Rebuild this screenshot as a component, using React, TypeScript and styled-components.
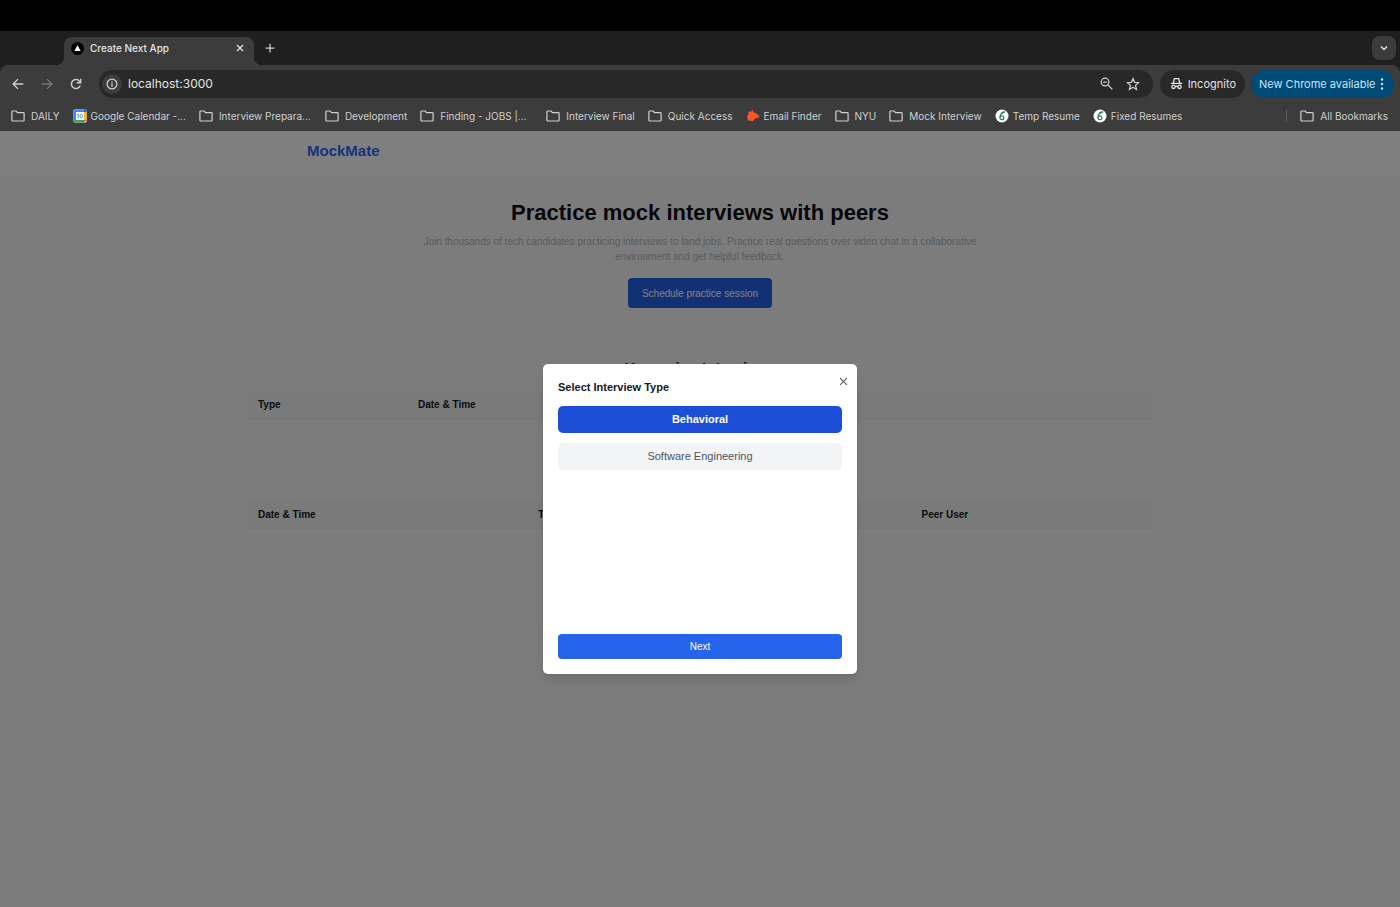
import React from 'react';
import styled, { createGlobalStyle } from 'styled-components';

const GlobalStyle = createGlobalStyle`
  *, *::before, *::after { box-sizing: border-box; }
  body { margin: 0; background: #000; }
  button, input { font: inherit; color: inherit; border: 0; padding: 0; margin: 0; background: none; }
  button { cursor: pointer; }
  svg { display: block; flex: none; }
`;

const Window = styled.div`
  display: flex;
  flex-direction: column;
  min-height: 100vh;
  padding-top: 31px;
  background: #000;
  font-family: Inter, 'Liberation Sans', sans-serif;
  color: #e3e3e3;
`;

const TabStrip = styled.div`
  display: flex;
  align-items: center;
  height: 34px;
  padding: 0 4px 0 64px;
  background: #1f1f1f;
`;

const Tab = styled.div`
  position: relative;
  display: flex;
  align-items: center;
  align-self: flex-end;
  gap: 6px;
  width: 190px;
  height: 28px;
  padding: 0 8px 6px 7px;
  border-radius: 8px 8px 0 0;
  background: #3c3c3c;
  font-size: 10px;
  font-weight: 500;

  &::before, &::after {
    content: '';
    position: absolute;
    bottom: 0;
    width: 8px;
    height: 8px;
  }
  &::before { left: -8px; background: radial-gradient(circle at 0 0, transparent 8px, #3c3c3c 8px); }
  &::after { right: -8px; background: radial-gradient(circle at 100% 0, transparent 8px, #3c3c3c 8px); }
`;

const TabTitle = styled.span`
  flex: 1;
  white-space: nowrap;
`;

const IconButton = styled.button<{ $size?: number; $color?: string }>`
  display: grid;
  place-items: center;
  width: ${(p) => p.$size ?? 16}px;
  height: ${(p) => p.$size ?? 16}px;
  color: ${(p) => p.$color ?? '#d0d0d0'};
`;

const NewTab = styled(IconButton)`
  margin-left: 8px;
`;

const TabSearch = styled(IconButton)`
  margin-left: auto;
  border-radius: 8px;
  background: #3c3c3c;
`;

const ToolbarWrap = styled.div`
  background: #1f1f1f;
`;

const Toolbar = styled.div`
  display: flex;
  align-items: center;
  height: 37px;
  padding: 0 6px 0 8px;
  border-radius: 8px 8px 0 0;
  background: #3c3c3c;
`;

const NavButtons = styled.div`
  display: flex;
  gap: 9px;
  margin-right: 13px;
`;

const AddressBar = styled.div`
  display: flex;
  flex: 1;
  align-items: center;
  gap: 6px;
  height: 28px;
  padding: 0 12px 0 3px;
  border-radius: 14px;
  background: #282828;
`;

const SiteInfo = styled(IconButton)`
  border-radius: 50%;
  background: #3c3c3c;
`;

const AddressInput = styled.input`
  flex: 1;
  min-width: 0;
  outline: 0;
  font-size: 12px;
`;

const AddressActions = styled.div`
  display: flex;
  gap: 11px;
`;

const Pill = styled.button<{ $blue?: boolean }>`
  display: flex;
  align-items: center;
  justify-content: space-between;
  width: ${(p) => (p.$blue ? 143 : 85)}px;
  height: 28px;
  margin-left: ${(p) => (p.$blue ? 6 : 7)}px;
  padding: ${(p) => (p.$blue ? '0 6px 0 8px' : '0 9px 0 10px')};
  border-radius: 14px;
  background: ${(p) => (p.$blue ? '#004a77' : '#282828')};
  color: ${(p) => (p.$blue ? '#c2e7ff' : '#e3e3e3')};
  font-size: 11px;
  white-space: nowrap;
`;

const Bookmarks = styled.nav`
  display: flex;
  align-items: center;
  gap: 13px;
  height: 29px;
  padding: 0 12px 2px 11px;
  background: #3c3c3c;
  color: #d0d0d0;
  font-size: 10px;
`;

const Bookmark = styled.a<{ $wide?: boolean; $site?: boolean }>`
  display: flex;
  flex: none;
  align-items: center;
  gap: ${(p) => (p.$site ? 4 : 6)}px;
  min-width: ${(p) => (p.$wide ? '113px' : '0')};
  color: inherit;
  text-decoration: none;
  white-space: nowrap;
`;

const AllBookmarks = styled.div`
  display: flex;
  align-items: center;
  gap: 13px;
  margin-left: auto;

  &::before {
    content: '';
    width: 1px;
    height: 11px;
    background: #606060;
  }
`;

const Viewport = styled.div`
  position: relative;
  flex: 1;
  background: #f8f9fb;
  color: #111827;
  font-family: 'Liberation Sans', Arial, sans-serif;
`;

const SiteHeader = styled.header`
  padding: 10px 20px 15px;
  background: #fff;
`;

const HeaderInner = styled.div`
  max-width: 786px;
  margin: 0 auto;
`;

const Brand = styled.a`
  color: #2f63f5;
  font-size: 15px;
  font-weight: 700;
  line-height: 20px;
  text-decoration: none;
`;

const Hero = styled.section`
  display: flex;
  flex-direction: column;
  align-items: center;
  padding: 22px 20px 50px;
  text-align: center;
`;

const HeroTitle = styled.h1`
  margin: 0 0 6px;
  color: #0f0f12;
  font-size: 22px;
  line-height: 30px;
`;

const HeroText = styled.p`
  max-width: 560px;
  margin: 0 0 14px;
  color: #b4b8bf;
  font-size: 10px;
  line-height: 15px;
`;

const ScheduleButton = styled.button`
  height: 30px;
  padding: 0 14px;
  border-radius: 4px;
  background: #2563eb;
  color: #fff;
  font-size: 10px;
`;

const Lists = styled.main`
  max-width: 944px;
  margin: 0 auto;
  padding: 0 20px;
`;

const SectionTitle = styled.h2`
  margin: 0 0 13px;
  font-size: 15px;
  line-height: 20px;
  text-align: center;
`;

const DataTable = styled.table`
  width: 100%;
  margin-bottom: 75px;
  border-collapse: collapse;
  table-layout: fixed;
  font-size: 10px;
  text-align: left;
`;

const HeadCell = styled.th<{ $width: number }>`
  width: ${(p) => p.$width}%;
  height: 28px;
  padding: 0 10px;
  border-bottom: 1px solid #ececec;
  background: #f4f4f4;
`;

const EmptyCell = styled.td<{ $height: number }>`
  height: ${(p) => p.$height}px;
  padding: 0;
  border-bottom: 1px solid #f4f5f7;
`;

const Overlay = styled.div`
  position: absolute;
  inset: 0;
  display: grid;
  place-items: center;
  background: rgba(0, 0, 0, 0.5);
`;

const Dialog = styled.div`
  position: relative;
  display: flex;
  flex-direction: column;
  gap: 10px;
  width: 314px;
  min-height: 310px;
  padding: 15px;
  border-radius: 5px;
  background: #fff;
  box-shadow: 0 6px 10px rgba(0, 0, 0, 0.1);
`;

const DialogTitle = styled.h3`
  margin: 0;
  font-size: 11px;
  line-height: 17px;
`;

const CloseButton = styled(IconButton)`
  position: absolute;
  top: 9px;
  right: 6px;
`;

const Option = styled.button<{ $selected?: boolean }>`
  height: 27px;
  padding-bottom: 1px;
  border-radius: 5px;
  background: ${(p) => (p.$selected ? '#1d4ed8' : '#f3f4f6')};
  color: ${(p) => (p.$selected ? '#fff' : '#4b5563')};
  font-size: 11px;
  font-weight: ${(p) => (p.$selected ? 700 : 400)};
`;

const NextButton = styled.button`
  height: 25px;
  margin-top: auto;
  border-radius: 4px;
  background: #2563eb;
  color: #fff;
  font-size: 10px;
`;

type StrokeProps = { size?: number; width?: number; children: React.ReactNode };

const Stroke = ({ size = 16, width = 1.4, children }: StrokeProps) => (
  <svg width={size} height={size} viewBox="0 0 16 16" fill="none" stroke="currentColor" strokeWidth={width} aria-hidden="true">
    {children}
  </svg>
);

const FolderIcon = () => (
  <svg width="14" height="12" viewBox="0 0 14 12" fill="none" stroke="currentColor" strokeWidth="1.2" strokeLinejoin="round" aria-hidden="true">
    <path d="M1.6 1H5l1.5 1.6h5.9c.4 0 .7.3.7.7v7c0 .4-.3.7-.7.7H1.6c-.4 0-.7-.3-.7-.7V1.7c0-.4.3-.7.7-.7Z" />
  </svg>
);

const NextLogo = () => (
  <svg width="13" height="13" viewBox="0 0 13 13" aria-hidden="true">
    <circle cx="6.5" cy="6.5" r="6.5" fill="#000" />
    <path d="M6.5 3.2 9.7 9H3.3Z" fill="#fff" />
  </svg>
);

const CalendarIcon = () => (
  <svg width="14" height="14" viewBox="0 0 14 14" aria-hidden="true">
    <rect x="0.5" y="0.5" width="13" height="13" rx="1" fill="#fff" />
    <path d="M.5 1.500Q.5.500 1.500.500h9.500v2.500H3v8H.5Z" fill="#4285f4" />
    <path d="M11 .5h1.500q1 0 1 1V3H11Z" fill="#1967d2" />
    <path d="M11 3h2.500v8H11Z" fill="#fbbc04" />
    <path d="M.5 11H11v2.500H1.500q-1 0-1-1Z" fill="#34a853" />
    <path d="M11 11h2.500L11 13.500Z" fill="#ea4335" />
    <path d="m4 5.800 1.300-.8v4.300" fill="none" stroke="#4285f4" strokeWidth=".9" />
    <ellipse cx="8.300" cy="7.100" rx="1.300" ry="1.800" fill="none" stroke="#4285f4" strokeWidth=".9" />
  </svg>
);

const HunterIcon = () => (
  <svg width="14" height="14" viewBox="0 0 14 14" fill="#ff5722" aria-hidden="true">
    <path d="M2.300 2.600 4.800 3 6.600 1l1 2.300 2 .9 3.700 2.600-.4 1.600-3.300.8-1.900 1.500-.9 2-2.300-1.300-2.900.2.300-2.500L.8 7.200l1.700-1.600Z" />
  </svg>
);

const ResumeIcon = () => (
  <svg width="14" height="14" viewBox="0 0 14 14" fill="none" aria-hidden="true">
    <circle cx="7" cy="7" r="6.500" fill="#fff" />
    <path d="M8.600 3.400C6.300 4.200 4.900 6.200 4.900 8.500c0 1.300.8 2.200 1.900 2.200s2-.9 2-2-.7-1.900-1.700-1.900c-.9 0-1.600.6-1.900 1.500" stroke="#2f7d55" strokeWidth="1.200" />
    <path d="M6.200 4.300Q8 2.800 10.200 3" stroke="#2f7d55" strokeWidth="1.300" />
  </svg>
);

const IncognitoIcon = () => (
  <svg width="13" height="13" viewBox="0 0 13 13" fill="none" stroke="currentColor" strokeWidth="1.300" aria-hidden="true">
    <path d="M3.400 5.800 4.300 1.700h4.400l.9 4.100M.9 6.300h11.200M5.100 9.700q1.400-.9 2.800 0" />
    <circle cx="3.500" cy="9.800" r="1.700" />
    <circle cx="9.500" cy="9.800" r="1.700" />
  </svg>
);

const CrossIcon = ({ size, width }: { size: number; width: number }) => (
  <Stroke size={size} width={width}><path d="m2 2 12 12M14 2 2 14" /></Stroke>
);

type BookmarkData = { label: string; wide?: boolean; icon?: React.ReactNode };

const bookmarks: BookmarkData[] = [
  { label: 'DAILY' },
  { label: 'Google Calendar -...', wide: true, icon: <CalendarIcon /> },
  { label: 'Interview Prepara...', wide: true },
  { label: 'Development' },
  { label: 'Finding - JOBS |...', wide: true },
  { label: 'Interview Final' },
  { label: 'Quick Access' },
  { label: 'Email Finder', icon: <HunterIcon /> },
  { label: 'NYU' },
  { label: 'Mock Interview' },
  { label: 'Temp Resume', icon: <ResumeIcon /> },
  { label: 'Fixed Resumes', icon: <ResumeIcon /> },
];

const interviewTypes = ['Behavioral', 'Software Engineering'];

type Column = { label: string; width: number };

const upcomingColumns: Column[] = [
  { label: 'Type', width: 17.7 },
  { label: 'Date & Time', width: 82.3 },
];

const pastColumns: Column[] = [
  { label: 'Date & Time', width: 31 },
  { label: 'Type', width: 42.4 },
  { label: 'Peer User', width: 26.6 },
];

const InterviewTable = ({ columns, bodyHeight }: { columns: Column[]; bodyHeight: number }) => (
  <DataTable>
    <thead>
      <tr>
        {columns.map((c) => (
          <HeadCell key={c.label} $width={c.width} scope="col">{c.label}</HeadCell>
        ))}
      </tr>
    </thead>
    <tbody>
      <tr><EmptyCell $height={bodyHeight} colSpan={columns.length} /></tr>
    </tbody>
  </DataTable>
);

export default function App() {
  const [selected, setSelected] = React.useState('Behavioral');

  return (
    <Window>
      <GlobalStyle />
      <TabStrip>
        <Tab>
          <NextLogo />
          <TabTitle>Create Next App</TabTitle>
          <IconButton $size={12} $color="#e3e3e3" aria-label="Close tab"><CrossIcon size={8} width={2.6} /></IconButton>
        </Tab>
        <NewTab aria-label="New tab">
          <Stroke size={10} width={2}><path d="M8 1v14M1 8h14" /></Stroke>
        </NewTab>
        <TabSearch $size={24} $color="#e3e3e3" aria-label="Search tabs">
          <Stroke size={8} width={3}><path d="m2 5 6 6 6-6" /></Stroke>
        </TabSearch>
      </TabStrip>

      <ToolbarWrap>
        <Toolbar>
          <NavButtons>
            <IconButton $size={20} aria-label="Back">
              <Stroke size={12} width={1.8}><path d="M15 8H2M8 1.500 1.500 8 8 14.500" /></Stroke>
            </IconButton>
            <IconButton $size={20} $color="#777" aria-label="Forward">
              <Stroke size={12} width={1.8}><path d="M1 8h13M8 1.500 14.500 8 8 14.500" /></Stroke>
            </IconButton>
            <IconButton $size={20} aria-label="Reload">
              <Stroke size={12} width={1.9}><path d="M13.600 10A6 6 0 1 1 12.600 4.200L14 6M14.200 1v5.300H9" /></Stroke>
            </IconButton>
          </NavButtons>
          <AddressBar>
            <SiteInfo $size={20} aria-label="Site information">
              <Stroke size={12} width={1.7}><circle cx="8" cy="8" r="6.500" /><path d="M8 7v4.500M8 4.300V6" /></Stroke>
            </SiteInfo>
            <AddressInput aria-label="Address" defaultValue="localhost:3000" />
            <AddressActions>
              <IconButton aria-label="Zoom">
                <Stroke size={13} width={1.6}><circle cx="6.200" cy="6.200" r="4.700" /><path d="m9.700 9.700 5.500 5.500M4 6.200h4.400" /></Stroke>
              </IconButton>
              <IconButton aria-label="Bookmark this tab">
                <Stroke size={14} width={1.4}><path d="m8 1.800 1.800 4.300 4.700.4-3.600 3.100 1.100 4.600L8 11.700l-4 2.500 1.100-4.600-3.600-3.100 4.700-.4Z" /></Stroke>
              </IconButton>
            </AddressActions>
          </AddressBar>
          <Pill><IncognitoIcon />Incognito</Pill>
          <Pill $blue>
            New Chrome available
            <svg width="12" height="12" viewBox="0 0 12 12" fill="currentColor" aria-hidden="true">
              <circle cx="6" cy="1.500" r="1.200" /><circle cx="6" cy="6" r="1.200" /><circle cx="6" cy="10.500" r="1.200" />
            </svg>
          </Pill>
        </Toolbar>
      </ToolbarWrap>

      <Bookmarks>
        {bookmarks.map((b) => (
          <Bookmark key={b.label} href="#" $wide={b.wide} $site={Boolean(b.icon)}>
            {b.icon ?? <FolderIcon />}
            {b.label}
          </Bookmark>
        ))}
        <AllBookmarks>
          <Bookmark href="#"><FolderIcon />All Bookmarks</Bookmark>
        </AllBookmarks>
      </Bookmarks>

      <Viewport>
        <SiteHeader>
          <HeaderInner><Brand href="#">MockMate</Brand></HeaderInner>
        </SiteHeader>
        <Hero>
          <HeroTitle>Practice mock interviews with peers</HeroTitle>
          <HeroText>
            Join thousands of tech candidates practicing interviews to land jobs. Practice real questions over video
            chat in a collaborative environment and get helpful feedback.
          </HeroText>
          <ScheduleButton>Schedule practice session</ScheduleButton>
        </Hero>
        <Lists>
          <SectionTitle>Upcoming Interviews</SectionTitle>
          <InterviewTable columns={upcomingColumns} bodyHeight={6} />
          <InterviewTable columns={pastColumns} bodyHeight={24} />
        </Lists>

        <Overlay>
          <Dialog role="dialog" aria-modal="true" aria-labelledby="interview-type-title">
            <DialogTitle id="interview-type-title">Select Interview Type</DialogTitle>
            <CloseButton $color="#4b5563" aria-label="Close"><CrossIcon size={9} width={1.8} /></CloseButton>
            {interviewTypes.map((type) => (
              <Option key={type} $selected={type === selected} aria-pressed={type === selected} onClick={() => setSelected(type)}>
                {type}
              </Option>
            ))}
            <NextButton>Next</NextButton>
          </Dialog>
        </Overlay>
      </Viewport>
    </Window>
  );
}
